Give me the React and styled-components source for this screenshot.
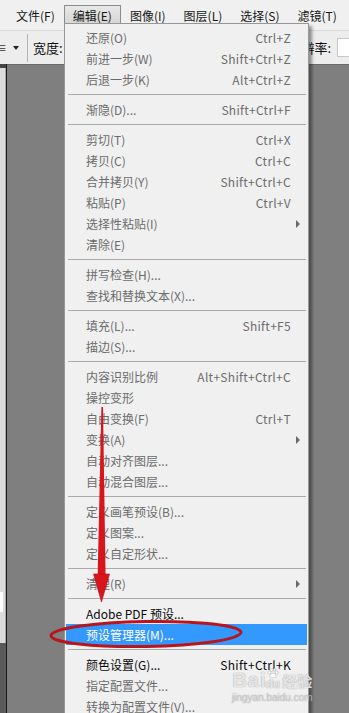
import React from "react"
import styled, { createGlobalStyle } from "styled-components"

const GlobalStyle = createGlobalStyle`
  html, body {
    margin: 0;
    padding: 0;
  }
  body {
    background: #7f7f7f;
    font-family: "Noto Sans CJK SC", "Noto Sans", sans-serif;
  }
`

const Screen = styled.div`
  position: relative;
  width: 349px;
  height: 713px;
  overflow: hidden;
  display: flex;
  flex-direction: column;
  background: #7f7f7f;
  font-size: 12px;
`

const MenuBar = styled.div`
  height: 30px;
  box-sizing: border-box;
  display: flex;
  align-items: flex-start;
  padding: 5px 0 0 7px;
  background: #f0f0f0;
  white-space: nowrap;
`

const MenuTitle = styled.div`
  height: 19px;
  line-height: 19px;
  padding: 0 8px;
  color: #161616;
  border: 1px solid ${(p) => (p.$open ? "#8c8c8c" : "transparent")};
  background: ${(p) => (p.$open ? "linear-gradient(#e8e8e8, #d4d4d4)" : "transparent")};
`

const OptionsBar = styled.div`
  height: 34px;
  box-sizing: border-box;
  display: flex;
  align-items: center;
  background: #ededed;
  border-top: 1px solid #d9d9d9;
  white-space: nowrap;
  overflow: hidden;
`

const PresetGlyph = styled.span`
  margin-left: -5px;
  width: 10px;
  font-size: 12px;
  color: #333;
`

const Caret = styled.span`
  margin-left: 8px;
  width: 0;
  height: 0;
  border-left: 3px solid transparent;
  border-right: 3px solid transparent;
  border-top: 4px solid #222;
`

const BarDivider = styled.div`
  width: 1px;
  height: 28px;
  margin: 0 5px 0 8px;
  background: #b3b3b3;
`

const BarLabel = styled.span`
  font-size: 13px;
  color: #111;
`

const Spacer = styled.div`
  flex: 1;
`

const BarInput = styled.div`
  width: 30px;
  height: 17px;
  margin: 0 -20px 0 6px;
  background: #fff;
  border: 1px solid #c8c8c8;
`

const Workspace = styled.div`
  flex: 1;
  display: flex;
`

const ToolPanel = styled.div`
  width: 6px;
  display: flex;
  flex-direction: column;
`

const PanelHead = styled.div`
  height: 4px;
  background: #454545;
`

const PanelBody = styled.div`
  height: 575px;
  background: #dcdcdc;
  border-right: 1px solid #a9a9a9;
  box-sizing: border-box;
  display: flex;
  flex-direction: column;
`

const PanelField = styled.div`
  width: 3px;
  height: 20px;
  margin-top: 524px;
  background: #fff;
`

const PanelFoot = styled.div`
  flex: 1;
  background: #5a5a5a;
`

const PanelEdge = styled.div`
  width: 1px;
  background: #1a1a1a;
`

const Canvas = styled.div`
  flex: 1;
  background: #7f7f7f;
  border-top: 1px solid #6a6a6a;
`

const DropMenu = styled.div`
  position: absolute;
  top: 23px;
  left: 64px;
  width: 245px;
  box-sizing: border-box;
  padding: 3px 1px;
  background: #f0f0f0;
  border: 1px solid #979797;
  box-shadow: 3px 3px 3px rgba(0, 0, 0, 0.4);
  z-index: 2;
`

const Item = styled.div`
  height: 21px;
  display: flex;
  align-items: center;
  padding-left: 20px;
  white-space: nowrap;
  color: ${(p) => (p.$active ? "#fff" : p.$enabled ? "#0a0a0a" : "#6c6c6c")};
  background: ${(p) => (p.$active ? "#3399ff" : "transparent")};
`

const ItemLabel = styled.span`
  flex: 1;
`

const Shortcut = styled.span`
  letter-spacing: 0.3px;
`

const SubCell = styled.span`
  width: 16px;
  padding-left: 5px;
  box-sizing: border-box;
  display: flex;
  align-items: center;
`

const SubArrow = styled.span`
  width: 0;
  height: 0;
  border-top: 4px solid transparent;
  border-bottom: 4px solid transparent;
  border-left: 4px solid #6a6a6a;
`

const Separator = styled.div`
  height: 9px;
  display: flex;
  align-items: center;
  margin: 0 1px 0 2px;
  &::after {
    content: "";
    flex: 1;
    height: 1px;
    background: #a9a9a9;
  }
`

const Markup = styled.svg`
  position: absolute;
  top: 0;
  left: 0;
  z-index: 3;
  pointer-events: none;
`

const Watermark = styled.div`
  position: absolute;
  left: 232px;
  top: 666px;
  z-index: 4;
  color: rgba(255, 255, 255, 0.8);
  text-shadow: 0 0 1px rgba(80, 80, 80, 0.7);
  display: flex;
  flex-direction: column;
  align-items: center;
`

const MarkRow = styled.div`
  display: flex;
  align-items: flex-end;
  height: 24px;
`

const MarkLatin = styled.span`
  font-family: "Liberation Sans", Arial, sans-serif;
  font-weight: bold;
  font-size: 20px;
  line-height: 20px;
  letter-spacing: 1px;
`

const DuBlock = styled.span`
  display: flex;
  flex-direction: column;
  align-items: center;
  margin-left: -1px;
  font-family: "Liberation Sans", Arial, sans-serif;
  font-weight: bold;
  font-size: 12px;
  line-height: 12px;
`

const MarkCn = styled.span`
  margin-left: 2px;
  font-family: "Noto Sans CJK SC", sans-serif;
  font-size: 15px;
  line-height: 19px;
  font-weight: bold;
`

const MarkUrl = styled.div`
  margin-top: 2px;
  font-family: "Liberation Sans", Arial, sans-serif;
  font-size: 10px;
  line-height: 11px;
  color: rgba(255, 255, 255, 0.55);
`

const menuTitles = ["文件(F)", "编辑(E)", "图像(I)", "图层(L)", "选择(S)", "滤镜(T)", "视图(V)"]

const groups = [
  [
    { label: "还原(O)", key: "Ctrl+Z" },
    { label: "前进一步(W)", key: "Shift+Ctrl+Z" },
    { label: "后退一步(K)", key: "Alt+Ctrl+Z" },
  ],
  [{ label: "渐隐(D)...", key: "Shift+Ctrl+F" }],
  [
    { label: "剪切(T)", key: "Ctrl+X" },
    { label: "拷贝(C)", key: "Ctrl+C" },
    { label: "合并拷贝(Y)", key: "Shift+Ctrl+C" },
    { label: "粘贴(P)", key: "Ctrl+V" },
    { label: "选择性粘贴(I)", sub: true },
    { label: "清除(E)" },
  ],
  [{ label: "拼写检查(H)..." }, { label: "查找和替换文本(X)..." }],
  [{ label: "填充(L)...", key: "Shift+F5" }, { label: "描边(S)..." }],
  [
    { label: "内容识别比例", key: "Alt+Shift+Ctrl+C" },
    { label: "操控变形" },
    { label: "自由变换(F)", key: "Ctrl+T" },
    { label: "变换(A)", sub: true },
    { label: "自动对齐图层..." },
    { label: "自动混合图层..." },
  ],
  [{ label: "定义画笔预设(B)..." }, { label: "定义图案..." }, { label: "定义自定形状..." }],
  [{ label: "清理(R)", sub: true }],
  [
    { label: "Adobe PDF 预设...", enabled: true },
    { label: "预设管理器(M)...", active: true },
  ],
  [
    { label: "颜色设置(G)...", key: "Shift+Ctrl+K", enabled: true },
    { label: "指定配置文件..." },
    { label: "转换为配置文件(V)..." },
  ],
]

function Paw() {
  return (
    <svg width="12" height="10" viewBox="0 0 14 12">
      <g fill="rgba(255,255,255,0.85)" stroke="rgba(100,100,100,0.5)" strokeWidth="0.6">
        <ellipse cx="2.6" cy="5.4" rx="1.6" ry="2" />
        <ellipse cx="5.4" cy="2.2" rx="1.6" ry="2" />
        <ellipse cx="8.8" cy="2.2" rx="1.6" ry="2" />
        <ellipse cx="11.4" cy="5.4" rx="1.6" ry="2" />
        <path d="M7 6c2 0 3.8 2.6 3.8 4.2S9 12 7 11.6C5 12 3.2 12 3.2 10.2S5 6 7 6z" />
      </g>
    </svg>
  )
}

export default function App() {
  return (
    <>
      <GlobalStyle />
      <Screen>
        <MenuBar>
          {menuTitles.map((t) => (
            <MenuTitle key={t} $open={t === "编辑(E)"}>
              {t}
            </MenuTitle>
          ))}
        </MenuBar>

        <OptionsBar>
          <PresetGlyph>≡</PresetGlyph>
          <Caret />
          <BarDivider />
          <BarLabel>宽度:</BarLabel>
          <Spacer />
          <BarLabel>分辨率:</BarLabel>
          <BarInput />
        </OptionsBar>

        <Workspace>
          <ToolPanel>
            <PanelHead />
            <PanelBody>
              <PanelField />
            </PanelBody>
            <PanelFoot />
          </ToolPanel>
          <PanelEdge />
          <Canvas />
        </Workspace>

        <DropMenu>
          {groups.map((group, gi) => (
            <React.Fragment key={gi}>
              {gi > 0 && <Separator />}
              {group.map((it) => (
                <Item key={it.label} $enabled={it.enabled} $active={it.active}>
                  <ItemLabel>{it.label}</ItemLabel>
                  {it.key && <Shortcut>{it.key}</Shortcut>}
                  <SubCell>{it.sub && <SubArrow />}</SubCell>
                </Item>
              ))}
            </React.Fragment>
          ))}
        </DropMenu>

        <Markup width="349" height="713" viewBox="0 0 349 713">
          <path d="M101.4 407 L103 407 L105.6 578 L97.6 578 Z" fill="#d8141d" />
          <path d="M93.5 574 L109.5 574 L101.5 602 Z" fill="#d8141d" stroke="#b20f16" strokeWidth="0.6" />
          <ellipse
            cx="146"
            cy="634"
            rx="95"
            ry="12.5"
            fill="none"
            stroke="#b8151d"
            strokeWidth="3"
            transform="rotate(-1 146 634)"
          />
        </Markup>

        <Watermark>
          <MarkRow>
            <MarkLatin>Bai</MarkLatin>
            <DuBlock>
              <Paw />
              du
            </DuBlock>
            <MarkCn>经验</MarkCn>
          </MarkRow>
          <MarkUrl>jingyan.baidu.com</MarkUrl>
        </Watermark>
      </Screen>
    </>
  )
}
